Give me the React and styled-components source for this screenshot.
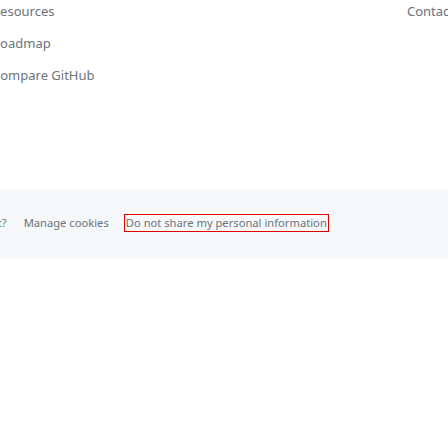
import styled, { createGlobalStyle } from "styled-components";

const GlobalStyle = createGlobalStyle`
  html, body {
    margin: 0;
    padding: 0;
    background: #ffffff;
    overflow: hidden;
  }
  body {
    font-family: "Noto Sans", "Open Sans", "Liberation Sans", sans-serif;
  }
`;

const Page = styled.div`
  width: 448px;
  height: 448px;
  overflow: hidden;
  display: flex;
  flex-direction: column;
`;

const FooterTop = styled.div`
  display: flex;
  justify-content: space-between;
  height: 190px;
  margin-left: -8px;
  margin-right: -6px;
`;

const LinkColumn = styled.ul`
  list-style: none;
  margin: 0;
  padding: 0;
  display: flex;
  flex-direction: column;
  gap: 14px;
`;

const FooterLink = styled.a`
  display: block;
  font-size: 13px;
  line-height: 18px;
  color: #6a737e;
  text-decoration: none;
  white-space: nowrap;
  margin-top: ${(p) => (p.$first ? "2px" : "0")};
`;

const Legal = styled.div`
  background: #f6f8fa;
  height: 68px;
  display: flex;
  align-items: center;
  padding-bottom: 2px;
  box-sizing: border-box;
`;

const LegalRow = styled.div`
  display: flex;
  align-items: center;
  gap: 13px;
  margin-left: -57px;
  white-space: nowrap;
`;

const LegalLink = styled.a`
  font-size: 11.2px;
  line-height: 14px;
  color: #6a737e;
  text-decoration: none;
  padding: 1px;
  border: 1px solid ${(p) => (p.$focused ? "#e00000" : "transparent")};
`;

const topLinks = ["Resources", "Roadmap", "Compare GitHub"];

export default function App() {
  return (
    <>
      <GlobalStyle />
      <Page>
        <FooterTop>
          <LinkColumn>
            {topLinks.map((label, i) => (
              <li key={label}>
                <FooterLink href="#" $first={i === 0}>
                  {label}
                </FooterLink>
              </li>
            ))}
          </LinkColumn>
          <LinkColumn>
            <li>
              <FooterLink href="#" $first>
                Contact
              </FooterLink>
            </li>
          </LinkColumn>
        </FooterTop>
        <Legal>
          <LegalRow>
            <LegalLink href="#">What is Git?</LegalLink>
            <LegalLink href="#">Manage cookies</LegalLink>
            <LegalLink href="#" $focused>
              Do not share my personal information
            </LegalLink>
          </LegalRow>
        </Legal>
      </Page>
    </>
  );
}
